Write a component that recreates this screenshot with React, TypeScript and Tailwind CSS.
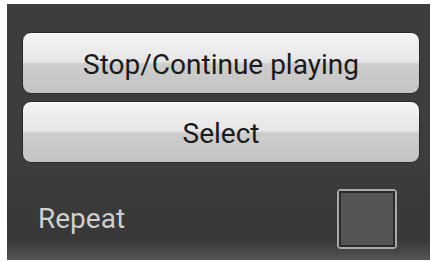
import React, { useState } from "react";

const GlossButton: React.FC<{ label: string }> = ({ label }) => (
  <button className="relative h-[62px] w-full overflow-hidden rounded-[9px] border border-[#2a2a2a] bg-[linear-gradient(to_bottom,#f4f4f4_0%,#e6e6e6_48%,#cdcdcd_52%,#c4c4c4_100%)] pt-[3px] text-[28px] text-[#1a1a1a] shadow-[inset_0_1px_0_#ffffff]">
    {label}
  </button>
);

export default function App() {
  const [repeat, setRepeat] = useState(false);

  return (
    <div className="h-[262px] w-[432px] bg-white pl-[7px] pt-[4px] font-['Roboto',sans-serif]">
      <div className="flex h-[256px] w-[423px] flex-col bg-[#3d3d3d]">
        {/* Buttons */}
        <div className="flex flex-col gap-[7px] pl-[15px] pr-[10px] pt-[28px]">
          <GlossButton label="Stop/Continue playing" />
          <GlossButton label="Select" />
        </div>

        {/* Repeat row */}
        <div className="mt-[12px] flex flex-1 items-center justify-between bg-[linear-gradient(to_bottom,#3b3b3b_0%,#383838_75%,#4a4a4a_92%,#565656_100%)] pl-[31px] pr-[33px] pt-[2px]">
          <span className="text-[28px] text-[#cfcfcf]">Repeat</span>
          <button
            onClick={() => setRepeat(!repeat)}
            className="h-[60px] w-[60px] rounded-[4px] border-2 border-[#a8a8a8] p-0"
          >
            <div className="h-full w-full border-2 border-[#2b2b2b] bg-[#555555]" />
          </button>
        </div>
      </div>
    </div>
  );
}
